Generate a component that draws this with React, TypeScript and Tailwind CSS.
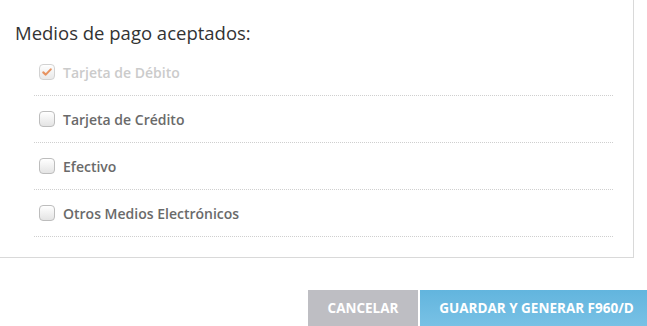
import React from "react";

const items = [
  { label: "Tarjeta de Débito", checked: true, disabled: true },
  { label: "Tarjeta de Crédito", checked: false, disabled: false },
  { label: "Efectivo", checked: false, disabled: false },
  { label: "Otros Medios Electrónicos", checked: false, disabled: false },
];

const Box = ({ checked, disabled }: { checked: boolean; disabled: boolean }) => (
  <span
    className={`w-[16px] h-[16px] rounded-[4px] border flex items-center justify-center flex-shrink-0 bg-gradient-to-b from-[#ffffff] to-[#e4e4e4] ${
      disabled ? "border-[#c8c8c8] opacity-80" : "border-[#bdbdbd]"
    }`}
  >
    {checked && (
      <svg viewBox="0 0 16 16" className="w-[12px] h-[12px]">
        <path
          d="M3 8.5 L6.3 11.5 L13 4.5"
          fill="none"
          stroke="#e2793a"
          strokeWidth="2.8"
          strokeLinecap="round"
          strokeLinejoin="round"
        />
      </svg>
    )}
  </span>
);

export default function App() {
  return (
    <div className="w-[647px] h-[326px] bg-white overflow-hidden" style={{ fontFamily: '"Open Sans", "Liberation Sans", sans-serif' }}>
      <div className="w-[634px] h-[258px] border-r border-b border-[#d9d9d9] pt-[20px]">
        <h2 className="pl-[15px] text-[18.5px] leading-[26px] text-[#333]">Medios de pago aceptados:</h2>
        <ul className="ml-[34px] mr-[20px] mt-[3px]">
          {items.map((it) => (
            <li
              key={it.label}
              className="h-[47px] flex items-center gap-[8px] pl-[5px] border-b border-dotted border-[#cfcfcf]"
            >
              <Box checked={it.checked} disabled={it.disabled} />
              <span className={`text-[14px] font-semibold ${it.disabled ? "text-[#cbcbcb]" : "text-[#6a6a6a]"}`}>{it.label}</span>
            </li>
          ))}
        </ul>
      </div>
      <div className="flex justify-end gap-[2px] mt-[32px] mr-[-6px]">
        <button className="w-[110px] h-[36px] bg-[#bebec3] text-white font-bold text-[13.5px] flex-shrink-0">CANCELAR</button>
        <button className="w-[233px] h-[36px] bg-gradient-to-b from-[#62b5de] to-[#78c1e5] text-white font-bold text-[13.5px] flex-shrink-0">
          GUARDAR Y GENERAR F960/D
        </button>
      </div>
    </div>
  );
}
